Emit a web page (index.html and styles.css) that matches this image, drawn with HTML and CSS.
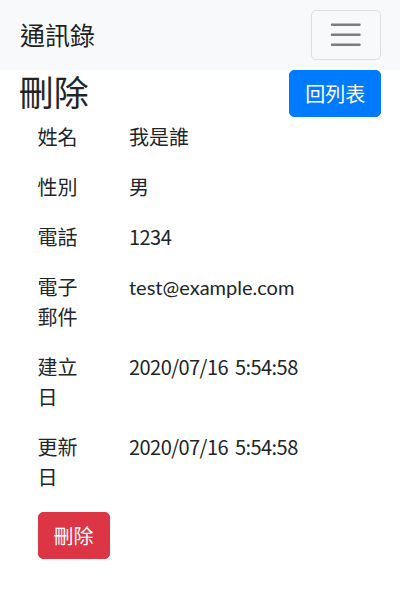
FILE: index.html
```html
<!DOCTYPE html>
<html lang="zh-Hant">
<head>
<meta charset="utf-8">
<title>刪除 - 通訊錄</title>
<link rel="stylesheet" href="styles.css">
</head>
<body>
<nav class="navbar">
  <a class="brand" href="#">通訊錄</a>
  <button class="toggler" type="button" aria-label="Toggle navigation">
    <svg class="toggler-icon" viewBox="0 0 30 30" width="37.5" height="37.5">
      <path d="M4 7h22M4 15h22M4 23h22" stroke="rgba(0,0,0,0.5)" stroke-width="2" stroke-linecap="round" fill="none"/>
    </svg>
  </button>
</nav>
<main class="container">
  <div class="header">
    <h3 class="title">刪除</h3>
    <a class="btn btn-primary" href="#">回列表</a>
  </div>
  <dl class="details">
    <dt>姓名</dt><dd>我是誰</dd>
    <dt>性別</dt><dd>男</dd>
    <dt>電話</dt><dd class="num">1234</dd>
    <dt>電子郵件</dt><dd class="email">test@example.com</dd>
    <dt>建立日</dt><dd class="num">2020/07/16 5:54:58</dd>
    <dt>更新日</dt><dd class="num">2020/07/16 5:54:58</dd>
  </dl>
  <form class="actions">
    <button class="btn btn-danger" type="submit">刪除</button>
  </form>
</main>
</body>
</html>
```

FILE: styles.css
```css
* { box-sizing: border-box; }

html, body {
  margin: 0;
  padding: 0;
}

body {
  font-family: "Noto Sans CJK TC", sans-serif;
  font-size: 20px;
  line-height: 1.5;
  color: #212529;
  background: #fff;
}

.navbar {
  display: flex;
  align-items: center;
  justify-content: space-between;
  height: 70px;
  padding: 10px 20px;
  background: #f8f9fa;
}

.brand {
  font-size: 25px;
  line-height: 1.5;
  color: rgba(0, 0, 0, 0.9);
  text-decoration: none;
}

.toggler {
  width: 70px;
  height: 50px;
  margin-right: -1px;
  padding: 5px 15px;
  display: flex;
  align-items: center;
  justify-content: center;
  background: transparent;
  border: 1.25px solid rgba(0, 0, 0, 0.1);
  border-radius: 5px;
}

.toggler-icon {
  display: block;
}

.container {
  padding: 0 18.75px;
}

.header {
  display: flex;
  justify-content: space-between;
  align-items: flex-start;
}

.title {
  margin: 0 0 10px;
  font-size: 35px;
  font-weight: 400;
  line-height: 42px;
}

.btn {
  display: inline-block;
  font-family: inherit;
  font-size: 20px;
  line-height: 30px;
  padding: 7.5px 15px;
  border: 1.25px solid transparent;
  border-radius: 5px;
  color: #fff;
  text-decoration: none;
  cursor: pointer;
}

.btn-primary {
  background: #007bff;
  border-color: #007bff;
}

.btn-danger {
  background: #dc3545;
  border-color: #dc3545;
}

.details {
  display: grid;
  grid-template-columns: 91.5px 1fr;
  row-gap: 20px;
  margin: 0;
}

.details dt,
.details dd {
  margin: 0;
  padding: 0 18.75px;
  font-weight: 400;
}

.details .num {
  letter-spacing: -0.55px;
  word-spacing: 3px;
}

.details .email {
  font-family: Lato, "Noto Sans CJK TC", sans-serif;
}

.actions {
  margin: 20px 0 0;
  padding-left: 18.75px;
}
```
